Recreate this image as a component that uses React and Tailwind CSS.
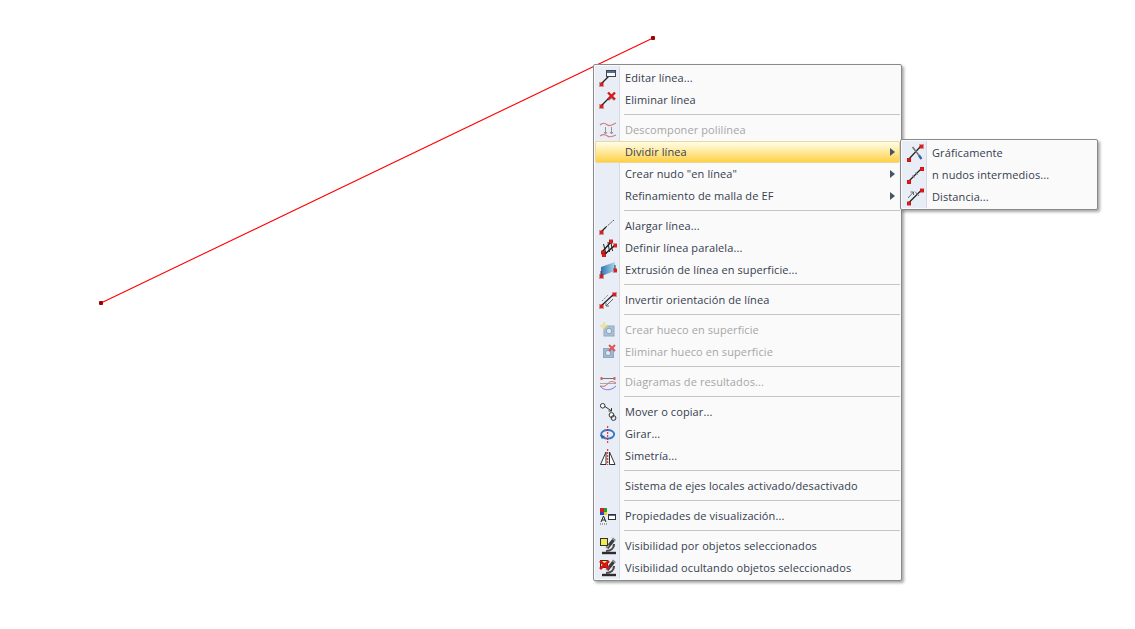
const Node = ({ x, y }) => (
  <rect x={x - 1.5} y={y - 1.5} width="3.5" height="3.5" fill="#e81818" stroke="#a01010" strokeWidth="0.4" shapeRendering="crispEdges" />
);

const Microscope = () => (
  <>
    <path d="M3 16 H17" stroke="#2c2c2c" strokeWidth="2.4" />
    <path d="M7 14 C12 14 15 11 15 7" stroke="#4a4a4a" strokeWidth="2.2" fill="none" />
    <path d="M8 11 L14.5 3" stroke="#3c3c3c" strokeWidth="3.4" />
    <path d="M7 11 L10 8" stroke="#9a9a9a" strokeWidth="1.6" />
    <path d="M13.5 1 L16.5 3.5" stroke="#777" strokeWidth="1.2" />
  </>
);

const icons = {
  edit: (
    <>
      <path d="M2 15 L10 7" stroke="#222" strokeWidth="1.2" />
      <Node x={2} y={15} />
      <rect x="7.5" y="1.5" width="9" height="6" fill="#fafafa" stroke="#444" shapeRendering="crispEdges" />
      <rect x="8" y="2" width="8" height="2" fill="#4c6f9c" shapeRendering="crispEdges" />
    </>
  ),
  del: (
    <>
      <path d="M2 15 L12 5" stroke="#222" strokeWidth="1.2" />
      <Node x={2} y={15} />
      <path d="M9 1.5 L16 8.5 M16 1.5 L9 8.5" stroke="#d81818" strokeWidth="2.4" />
      <path d="M10 9.5 L12.5 7 L15 9.5" stroke="#555" strokeWidth="0.7" fill="none" />
    </>
  ),
  split: (
    <g opacity="0.65">
      <path d="M1 4 C4 1 6 2 8.5 4 C11 6 14 3 17 2 M1 15 C4 13 6 13 8.5 15 C11 17 14 15 17 14" stroke="#c84040" strokeWidth="1.2" fill="none" />
      <path d="M6.5 6 V13 M12.5 6 V13" stroke="#666" />
      <path d="M5 11 L6.5 13 L8 11 M11 11 L12.5 13 L14 11" stroke="#666" fill="none" />
    </g>
  ),
  extend: (
    <>
      <path d="M2 15 L7 10" stroke="#222" strokeWidth="1.2" />
      <path d="M7 10 L15 3" stroke="#222" strokeDasharray="1.2 1.2" />
      <Node x={2} y={15} />
    </>
  ),
  parallel: (
    <>
      <path d="M3 13 L12 3 M5 16 L16 6" stroke="#111" strokeWidth="1.2" />
      <path d="M4.5 5 L7 15 M9 3 L10.5 13 M12 4 L13.5 12" stroke="#222" />
      <Node x={3.5} y={13} />
      <Node x={11.5} y={2} />
      <Node x={4.5} y={16} />
      <Node x={16} y={6} />
    </>
  ),
  extrude: (
    <>
      <defs>
        <linearGradient id="extrudeFill" x1="0" x2="1" y1="0" y2="0">
          <stop offset="0" stopColor="#3472b4" />
          <stop offset="1" stopColor="#a8d8ec" />
        </linearGradient>
      </defs>
      <path d="M2 6 L16 1 V10 L2 15 Z" fill="url(#extrudeFill)" />
      <path d="M2 10 V17 M16 4 V11" stroke="#222" strokeWidth="0.9" />
      <Node x={2} y={15} />
      <Node x={16} y={9} />
    </>
  ),
  invert: (
    <>
      <path d="M2 15 L15 3" stroke="#222" strokeWidth="1.2" />
      <path d="M3 10 L9 4" stroke="#777" strokeDasharray="1.5 1" />
      <path d="M7 15 L14 8 M7 15 H10 M7 15 V12" stroke="#666" fill="none" />
      <Node x={2} y={15} />
      <Node x={15} y={3} />
    </>
  ),
  holeAdd: (
    <g opacity="0.7">
      <rect x="5" y="5" width="10" height="10" fill="#8fb0cc" stroke="#6a8aa8" />
      <circle cx="10" cy="10" r="2.8" fill="#dce8f2" stroke="#60809c" />
      <path d="M5 1 L6 3.8 L9 5 L6 6.2 L5 9 L4 6.2 L1 5 L4 3.8 Z" fill="#f5e660" stroke="#c8b840" strokeWidth="0.3" />
    </g>
  ),
  holeDel: (
    <g opacity="0.7">
      <rect x="4.5" y="5.5" width="10" height="9" fill="#7fa2c2" stroke="#6a8aa8" />
      <circle cx="9" cy="10" r="2.6" fill="#dce8f2" stroke="#60809c" />
      <path d="M10 2 L16 8 M16 2 L10 8" stroke="#d81818" strokeWidth="2" />
    </g>
  ),
  diagram: (
    <g opacity="0.8">
      <path d="M2 5.5 H16" stroke="#555" />
      <rect x="1.5" y="4" width="2" height="3" fill="#d04040" />
      <rect x="14.5" y="4" width="2" height="3" fill="#d04040" />
      <path d="M1 10.5 H17" stroke="#999" />
      <path d="M1 13 C5 14 7 13 9 10.5 C11 8 14 8 17 10" stroke="#d04848" fill="none" />
      <path d="M1 13 C5 18 12 18 17 13" stroke="#6060c8" fill="none" />
    </g>
  ),
  move: (
    <>
      <circle cx="3.7" cy="2.8" r="2.3" fill="#fff" stroke="#333" />
      <path d="M6 3.5 L12.5 8 M12.5 8 V5 M12.5 8 H9.5" stroke="#333" fill="none" />
      <circle cx="12.5" cy="12" r="2.4" fill="#fff" stroke="#333" />
      <circle cx="14.5" cy="15" r="2.4" fill="none" stroke="#333" />
    </>
  ),
  rotate: (
    <>
      <ellipse cx="8.7" cy="9.3" rx="6.5" ry="4.3" fill="none" stroke="#3a78c0" strokeWidth="1.9" />
      <path d="M1 10 L3 14 L6 11 Z" fill="#2a60a8" />
      <path d="M8.7 1 V18" stroke="#f01010" strokeDasharray="2 1" />
    </>
  ),
  mirror: (
    <>
      <path d="M7 5 V17.5 H1.5 Z M10.5 5 V17.5 H16 Z" fill="#fff" stroke="#333" />
      <path d="M8.7 2 V18" stroke="#f01010" strokeDasharray="2 1" />
    </>
  ),
  props: (
    <>
      <g shapeRendering="crispEdges">
        <rect x="1" y="1" width="3.5" height="3.5" fill="#d02020" />
        <rect x="4.5" y="1" width="3.5" height="3.5" fill="#28a028" />
        <rect x="1" y="4.5" width="3.5" height="3.5" fill="#2848c0" />
        <rect x="4.5" y="4.5" width="3.5" height="3.5" fill="#e8d020" />
      </g>
      <path d="M2 15 L4.5 9 L7 15 M3 13 H6" stroke="#222" fill="none" />
      <path d="M1 17 H8" stroke="#555" strokeDasharray="1 1" />
      <g shapeRendering="crispEdges">
        <rect x="9.5" y="7.5" width="7" height="5" fill="#fff" stroke="#333" />
        <rect x="10" y="8" width="6" height="1" fill="#4c6f9c" />
      </g>
    </>
  ),
  visOn: (
    <>
      <Microscope />
      <rect x="1.5" y="1.5" width="7" height="7" fill="#f4ea50" stroke="#333" shapeRendering="crispEdges" />
    </>
  ),
  visOff: (
    <>
      <Microscope />
      <rect x="1.5" y="1.5" width="7" height="7" fill="#f4ea50" stroke="#333" shapeRendering="crispEdges" />
      <path d="M1 2 L10 10 M10 2 L1 10" stroke="#e01010" strokeWidth="2.6" />
    </>
  ),
  graphic: (
    <>
      <path d="M2.5 15.5 L15 2" stroke="#222" strokeWidth="1.2" />
      <path d="M6.5 3 L13.5 12" stroke="#777" strokeWidth="1.6" />
      <path d="M13 11.5 L15.5 15" stroke="#3060b0" strokeWidth="2.2" />
      <Node x={2.5} y={15.5} />
      <Node x={15} y={2} />
    </>
  ),
  nodes: (
    <>
      <path d="M2.5 15.5 L15.5 2.5" stroke="#222" strokeWidth="1.2" />
      <path d="M6.5 9.5 L8.5 11.5 M9.5 6.5 L11.5 8.5" stroke="#666" />
      <Node x={2.5} y={15.5} />
      <Node x={15.5} y={2.5} />
    </>
  ),
  dist: (
    <>
      <path d="M2.5 15 L15.5 2" stroke="#222" strokeWidth="1.2" />
      <path d="M2 10 L7.5 4 M4.5 4 H7.5 V7" stroke="#666" fill="none" />
      <path d="M9 3.5 L13 8" stroke="#777" />
      <Node x={2.5} y={15} />
      <Node x={15.5} y={2} />
    </>
  ),
};

const Icon = ({ name }) => (
  <svg width="18" height="18" viewBox="0 0 18 18" className="shrink-0">
    {icons[name]}
  </svg>
);

const mainItems = [
  { icon: "edit", label: "Editar línea..." },
  { icon: "del", label: "Eliminar línea" },
  { sep: true },
  { icon: "split", label: "Descomponer polilínea", disabled: true },
  { label: "Dividir línea", sub: true, active: true },
  { label: 'Crear nudo "en línea"', sub: true },
  { label: "Refinamiento de malla de EF", sub: true },
  { sep: true },
  { icon: "extend", label: "Alargar línea..." },
  { icon: "parallel", label: "Definir línea paralela..." },
  { icon: "extrude", label: "Extrusión de línea en superficie..." },
  { sep: true },
  { icon: "invert", label: "Invertir orientación de línea" },
  { sep: true },
  { icon: "holeAdd", label: "Crear hueco en superficie", disabled: true },
  { icon: "holeDel", label: "Eliminar hueco en superficie", disabled: true },
  { sep: true },
  { icon: "diagram", label: "Diagramas de resultados...", disabled: true },
  { sep: true },
  { icon: "move", label: "Mover o copiar..." },
  { icon: "rotate", label: "Girar..." },
  { icon: "mirror", label: "Simetría..." },
  { sep: true },
  { label: "Sistema de ejes locales activado/desactivado" },
  { sep: true },
  { icon: "props", label: "Propiedades de visualización..." },
  { sep: true },
  { icon: "visOn", label: "Visibilidad por objetos seleccionados" },
  { icon: "visOff", label: "Visibilidad ocultando objetos seleccionados" },
];

const subItems = [
  { icon: "graphic", label: "Gráficamente" },
  { icon: "nodes", label: "n nudos intermedios..." },
  { icon: "dist", label: "Distancia..." },
];

function Row({ item }) {
  if (item.sep) {
    return (
      <div className="h-2 pt-[3px] pl-[29px]">
        <div className="h-px w-full bg-[#c5c5c5]" />
      </div>
    );
  }
  return (
    <div
      className={`relative h-[22px] flex items-center text-[11px] tracking-[0.1px] ${
        item.disabled ? "text-[#a6a6a6]" : "text-[#35404f]"
      }`}
    >
      {item.active && (
        <div className="absolute inset-0 rounded-[2px] border border-[#ecd898] bg-gradient-to-b from-[#fffde8] via-[#ffe690] via-55% to-[#ffd040]" />
      )}
      <div className="relative w-[25px] flex justify-center">{item.icon && <Icon name={item.icon} />}</div>
      <span className="relative ml-[5px]">{item.label}</span>
      {item.sub && (
        <span className="absolute right-[5px] w-0 h-0 border-y-[4px] border-y-transparent border-l-[5px] border-l-[#44546a]" />
      )}
    </div>
  );
}

function Menu({ items, className }) {
  return (
    <div
      className={`absolute rounded-[2px] border border-[#8a8a8a] bg-[#fafafa] pt-[2px] px-px pb-px shadow-[2px_2px_3px_rgba(0,0,0,0.35)] ${className}`}
    >
      <div className="absolute left-px top-px bottom-px w-[25px] bg-[#e9eef6] border-r border-[#d4d9e2]" />
      <div className="relative">
        {items.map((item, i) => (
          <Row key={i} item={item} />
        ))}
      </div>
    </div>
  );
}

export default function App() {
  return (
    <div className="relative w-[1135px] h-[629px] bg-white overflow-hidden font-['Open_Sans',sans-serif]">
      <svg width="1135" height="629" className="absolute inset-0">
        <line x1="101" y1="303" x2="653" y2="38" stroke="#ff0000" strokeWidth="1.1" />
        <rect x="99" y="301" width="4" height="4" rx="1" fill="#a00000" />
        <rect x="651" y="36" width="4" height="4" rx="1" fill="#a00000" />
      </svg>
      <Menu items={mainItems} className="left-[593px] top-[64px] w-[309px]" />
      <Menu items={subItems} className="left-[900px] top-[139px] w-[198px]" />
    </div>
  );
}
